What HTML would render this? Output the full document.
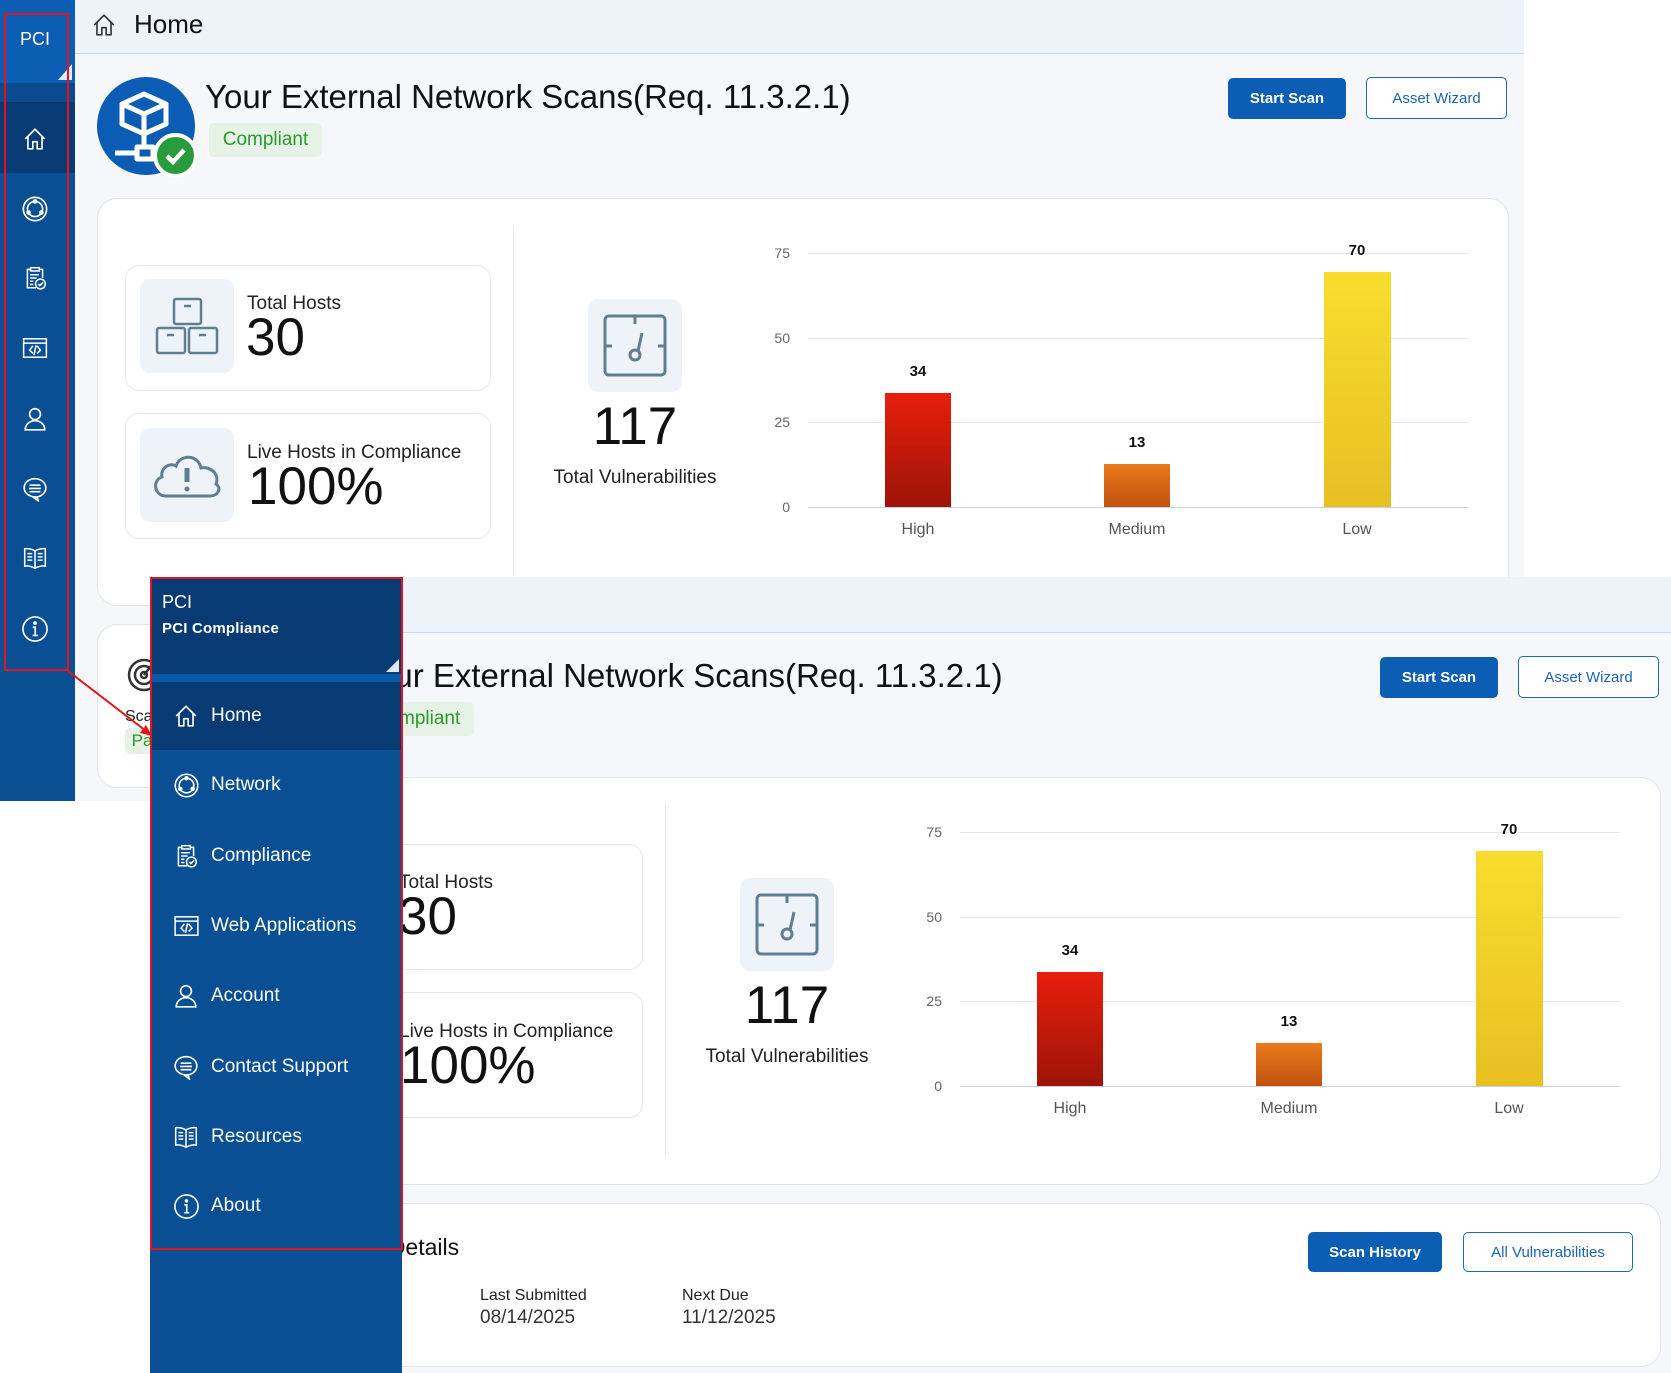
<!DOCTYPE html>
<html><head><meta charset="utf-8">
<style>
*{margin:0;padding:0;box-sizing:border-box}
body{width:1671px;height:1373px;position:relative;overflow:hidden;background:#fff;font-family:"Liberation Sans",sans-serif;color:#1a1a1a}
.abs{position:absolute}
.copy{position:absolute;overflow:hidden;background:#f5f7fa}
.hdr{position:absolute;left:75px;top:0;right:0;height:54px;background:#eef3fa;border-bottom:1px solid #c9d9ec}
.hdr span{position:absolute;top:9px;font-size:26px;color:#111;left:59px}
.title{position:absolute;left:205px;top:78px;font-size:33px;color:#111;white-space:nowrap}
.badge{position:absolute;background:#e6f2e6;color:#2a9a2a;border-radius:5px;font-size:19px;text-align:center}
.btn{position:absolute;border-radius:5px;font-size:15px;font-weight:bold;display:flex;align-items:center;justify-content:center}
.bp{background:#0b5eb3;color:#fff}
.bo{background:#fff;color:#1d63b5;border:1.5px solid #2265b5;font-weight:normal}
.card{position:absolute;background:#fff;border:1px solid #e1e4e8;border-radius:20px}
.ic{position:absolute;border:1px solid #e5e8eb;border-radius:14px;background:#fff}
.ibox{position:absolute;background:#eef3fa;border-radius:10px}
.lbl{position:absolute;font-size:19px;color:#222;white-space:nowrap}
.big{position:absolute;font-size:53px;color:#111;white-space:nowrap}
.sm{position:absolute;font-size:16px;color:#222;white-space:nowrap}
.val{position:absolute;font-size:19px;color:#333;white-space:nowrap}
.mi{position:absolute;left:0;width:252px;height:68px;color:#fff;font-size:19px}
.mi svg{position:absolute;left:23px;top:21px}
.mi span{position:absolute;left:61px;top:23px}
</style></head><body>
<svg width="0" height="0" style="position:absolute">
<defs>
<symbol id="home" viewBox="0 0 24 24"><path d="M3 12 L12 3 L21 12 M5.5 9.5 V21 H10 V14.5 H14 V21 H18.5 V9.5" fill="none" stroke="currentColor" stroke-width="1.5" stroke-linejoin="round"/></symbol>
<symbol id="net" viewBox="0 0 24 24"><g fill="none" stroke="currentColor" stroke-width="1.4"><circle cx="12" cy="12" r="10"/><circle cx="12" cy="12" r="6.5"/><circle cx="12" cy="5.5" r="1.3" fill="currentColor"/><circle cx="6.5" cy="15" r="1.3" fill="currentColor"/><circle cx="17.5" cy="15" r="1.3" fill="currentColor"/></g></symbol>
<symbol id="comp" viewBox="0 0 24 24"><g fill="none" stroke="currentColor" stroke-width="1.4"><path d="M13 21H5V4h3M16 4h3v8"/><rect x="8" y="2.5" width="8" height="3"/><path d="M7.5 9h8M7.5 12h6M7.5 15h3M7.5 18h3"/><circle cx="17" cy="17.5" r="4.5"/><path d="M15 17.5l1.5 1.5 3-3"/></g></symbol>
<symbol id="web" viewBox="0 0 24 24"><g fill="none" stroke="currentColor" stroke-width="1.4"><rect x="1.5" y="3.5" width="21" height="17"/><path d="M1.5 7.5h21M10 10l-3 4 3 3M14 10l3 4-3 3M13 9.5l-2 9"/></g></symbol>
<symbol id="acct" viewBox="0 0 24 24"><g fill="none" stroke="currentColor" stroke-width="1.5"><circle cx="12" cy="7.5" r="5"/><path d="M3 22c0-5 4-8.5 9-8.5s9 3.5 9 8.5z"/></g></symbol>
<symbol id="chat" viewBox="0 0 24 24"><g fill="none" stroke="currentColor" stroke-width="1.5"><path d="M12 2.5c5.5 0 10 3.8 10 8.5s-4.5 8.5-10 8.5c-.7 0-1.4 0-2-.2L15 23l-1-3.5C7 19.5 2 16 2 11s4.5-8.5 10-8.5z"/><path d="M7 8.5h10M6.5 11.5h11M7 14.5h10"/></g></symbol>
<symbol id="book" viewBox="0 0 24 24"><g fill="none" stroke="currentColor" stroke-width="1.4"><path d="M12 5.5C9 3.5 5 3 2.5 3.5v16c2.5-.5 6.5 0 9.5 2 3-2 7-2.5 9.5-2v-16c-2.5-.5-6.5 0-9.5 2zM12 5.5v16"/><path d="M5 8h4.5M5 11h4.5M5 14h4.5M14.5 8H19M14.5 11H19M14.5 14H19"/></g></symbol>
<symbol id="info" viewBox="0 0 24 24"><g fill="none" stroke="currentColor" stroke-width="1.4"><circle cx="12" cy="12" r="10.3"/><path d="M10 10.5h2.2v7M10 17.5h4.5"/><circle cx="12" cy="7" r=".9" fill="currentColor"/></g></symbol>
<linearGradient id="gr" x1="0" y1="0" x2="0" y2="1"><stop offset="0" stop-color="#e81e0c"/><stop offset="1" stop-color="#9c1408"/></linearGradient>
<linearGradient id="go" x1="0" y1="0" x2="0" y2="1"><stop offset="0" stop-color="#ea7a1c"/><stop offset="1" stop-color="#c2520f"/></linearGradient>
<linearGradient id="gy" x1="0" y1="0" x2="0" y2="1"><stop offset="0" stop-color="#f9dd2d"/><stop offset="1" stop-color="#e7bf22"/></linearGradient>
</defs></svg>

<!-- ============ COPY 1 ============ -->
<div class="copy" style="left:0;top:0;width:1524px;height:801px">
  <div class="hdr"><svg class="abs" style="left:16px;top:12px;color:#333" width="26" height="26"><use href="#home"/></svg><span>Home</span></div>
  <div class="abs" style="left:97px;top:77px;width:98px;height:98px;border-radius:50%;background:#0b5cb5"></div>
  <svg class="abs" style="left:97px;top:77px" width="98" height="98" viewBox="0 0 98 98"><g fill="none" stroke="#fff" stroke-width="5" stroke-linejoin="round"><path d="M25 27 L47 17 L69 27 L69 47 L47 57 L25 47Z M25 27 L47 37 L69 27 M47 37 V57 M47 57 V70 M18 76 H40 M40 70 H56 V82 H40Z"/></g></svg>
  <div class="abs" style="left:153px;top:133px;width:45px;height:45px;border-radius:50%;background:#2a9b3c;border:4px solid #fff"></div>
  <svg class="abs" style="left:153px;top:133px" width="45" height="45"><path d="M14 23 l6 6 11-12" fill="none" stroke="#fff" stroke-width="4.5"/></svg>
  <div class="title">Your External Network Scans(Req. 11.3.2.1)</div>
  <div class="badge" style="left:209px;top:123px;width:113px;height:34px;line-height:34px">Compliant</div>
  <div class="btn bp" style="left:1228px;top:78px;width:118px;height:41px">Start Scan</div>
  <div class="btn bo" style="left:1366px;top:77px;width:141px;height:42px">Asset Wizard</div>
  <div class="card" style="left:97px;top:198px;width:1412px;height:408px"></div>
  <div class="ic" style="left:125px;top:265px;width:366px;height:126px"></div>
  <div class="ibox" style="left:140px;top:279px;width:94px;height:94px"></div>
  <svg class="abs" style="left:140px;top:279px" width="94" height="94"><g fill="none" stroke="#5f7f90" stroke-width="2.5"><rect x="34" y="20" width="27" height="25" rx="2"/><rect x="17" y="49" width="28" height="25" rx="2"/><rect x="49" y="49" width="28" height="25" rx="2"/><path d="M44 27h7M27 56h7M59 56h7"/></g></svg>
  <div class="lbl" style="left:247px;top:293px">Total Hosts</div>
  <div class="big" style="left:246px;top:307px">30</div>
  <div class="ic" style="left:125px;top:413px;width:366px;height:126px"></div>
  <div class="ibox" style="left:140px;top:428px;width:94px;height:94px"></div>
  <svg class="abs" style="left:140px;top:428px" width="94" height="94"><g fill="none" stroke="#5f7f90" stroke-width="3"><path d="M26 68 C14 68 12 52 22 49 C20 40 30 34 36 38 C40 26 58 26 61 40 C70 38 80 46 76 56 C82 60 78 68 70 68Z"/><path d="M47 40v14" stroke-width="5"/><circle cx="47" cy="61" r="2.5" fill="#5f7f90" stroke="none"/></g></svg>
  <div class="lbl" style="left:247px;top:442px">Live Hosts in Compliance</div>
  <div class="big" style="left:248px;top:456px">100%</div>
  <div class="abs" style="left:513px;top:226px;width:1px;height:350px;background:#e6e8eb"></div>
  <div class="ibox" style="left:588px;top:299px;width:94px;height:93px"></div>
  <svg class="abs" style="left:588px;top:299px" width="94" height="93"><g fill="none" stroke="#5f7f90" stroke-width="3"><rect x="17" y="17" width="60" height="59" rx="4"/><path d="M47 17v8M17 47h7M70 47h7M54 34l-4 18"/><circle cx="47" cy="56" r="5"/></g></svg>
  <div class="big" style="left:535px;top:396px;width:200px;text-align:center">117</div>
  <div class="lbl" style="left:535px;top:467px;width:200px;text-align:center">Total Vulnerabilities</div>
  <svg class="abs" style="left:0;top:0" width="1524" height="801">
    <g font-family="Liberation Sans" font-size="14" fill="#666" text-anchor="end"><text x="790" y="258">75</text><text x="790" y="343">50</text><text x="790" y="427">25</text><text x="790" y="512">0</text></g>
    <g stroke="#e6e6e6"><path d="M808 253.5H1468M808 338.5H1468M808 422.5H1468"/></g>
    <path d="M808 507.5H1468" stroke="#c9d2e3"/>
    <rect x="885" y="393" width="66" height="114" fill="url(#gr)"/>
    <rect x="1104" y="464" width="66" height="43" fill="url(#go)"/>
    <rect x="1324" y="272" width="67" height="235" fill="url(#gy)"/>
    <g font-family="Liberation Sans" font-size="15" font-weight="bold" fill="#111" text-anchor="middle"><text x="918" y="376">34</text><text x="1137" y="447">13</text><text x="1357" y="255">70</text></g>
    <g font-family="Liberation Sans" font-size="16" fill="#555" text-anchor="middle"><text x="918" y="534">High</text><text x="1137" y="534">Medium</text><text x="1357" y="534">Low</text></g>
  </svg>
  <div class="card" style="left:97px;top:624px;width:1412px;height:164px"></div>
  <svg class="abs" style="left:126px;top:657px" width="36" height="36"><g fill="none" stroke="#333" stroke-width="2.5"><circle cx="18" cy="18" r="15"/><circle cx="18" cy="18" r="9"/><circle cx="18" cy="18" r="3"/><path d="M18 18 L28 5"/></g></svg>
  <div class="abs" style="left:178px;top:655px;font-size:23px;color:#111">Scan Details</div>
  <div class="sm" style="left:125px;top:708px">Scan Status</div>
  <div class="badge" style="left:125px;top:728px;width:70px;height:26px;line-height:26px;font-size:17px">Passed</div>
  <div class="sm" style="left:328px;top:708px">Last Submitted</div>
  <div class="val" style="left:328px;top:728px">08/14/2025</div>
  <div class="sm" style="left:530px;top:708px">Next Due</div>
  <div class="val" style="left:530px;top:728px">11/12/2025</div>
  <div class="btn bp" style="left:1156px;top:653px;width:134px;height:40px">Scan History</div>
  <div class="btn bo" style="left:1311px;top:653px;width:170px;height:40px">All Vulnerabilities</div>
  <!-- collapsed sidebar -->
  <div class="abs" style="left:0;top:0;width:75px;height:801px;background:#0a4f94"></div>
  <div class="abs" style="left:0;top:0;width:75px;height:83px;background:#0c5db4"></div>
  <div class="abs" style="left:0;top:83px;width:75px;height:19px;background:#0a4a8d"></div>
  <div class="abs" style="left:0;top:102px;width:75px;height:71px;background:#083b74"></div>
  <div class="abs" style="left:0;top:29px;width:70px;text-align:center;color:#fff;font-size:18px">PCI</div>
  <svg class="abs" style="left:58px;top:64px" width="14" height="16"><path d="M14 0V16H0Z" fill="#dfe8f3"/></svg>
  <svg class="abs" style="left:22px;top:126px;color:#fff" width="26" height="26"><use href="#home"/></svg>
  <svg class="abs" style="left:21px;top:195px;color:#fff" width="28" height="28"><use href="#net"/></svg>
  <svg class="abs" style="left:22px;top:265px;color:#fff" width="26" height="26"><use href="#comp"/></svg>
  <svg class="abs" style="left:21px;top:335px;color:#fff" width="28" height="26"><use href="#web"/></svg>
  <svg class="abs" style="left:22px;top:406px;color:#fff" width="26" height="26"><use href="#acct"/></svg>
  <svg class="abs" style="left:22px;top:476px;color:#fff" width="26" height="26"><use href="#chat"/></svg>
  <svg class="abs" style="left:22px;top:545px;color:#fff" width="26" height="26"><use href="#book"/></svg>
  <svg class="abs" style="left:21px;top:615px;color:#fff" width="28" height="28"><use href="#info"/></svg>
</div>

<!-- ============ COPY 2 ============ -->
<div class="copy" style="left:152px;top:577px;width:1519px;height:796px;background:#eef3fa">
 <div class="abs" style="left:0;top:2px;width:1524px;height:801px;background:#f5f7fa">
  <div class="hdr"><span>Home</span></div>
  <div class="title">Your External Network Scans(Req. 11.3.2.1)</div>
  <div class="badge" style="left:209px;top:123px;width:113px;height:34px;line-height:34px">Compliant</div>
  <div class="btn bp" style="left:1228px;top:78px;width:118px;height:41px">Start Scan</div>
  <div class="btn bo" style="left:1366px;top:77px;width:141px;height:42px">Asset Wizard</div>
  <div class="card" style="left:97px;top:198px;width:1412px;height:408px"></div>
  <div class="ic" style="left:125px;top:265px;width:366px;height:126px"></div>
  <div class="lbl" style="left:247px;top:293px">Total Hosts</div>
  <div class="big" style="left:246px;top:307px">30</div>
  <div class="ic" style="left:125px;top:413px;width:366px;height:126px"></div>
  <div class="lbl" style="left:247px;top:442px">Live Hosts in Compliance</div>
  <div class="big" style="left:248px;top:456px">100%</div>
  <div class="abs" style="left:513px;top:226px;width:1px;height:350px;background:#e6e8eb"></div>
  <div class="ibox" style="left:588px;top:299px;width:94px;height:93px"></div>
  <svg class="abs" style="left:588px;top:299px" width="94" height="93"><g fill="none" stroke="#5f7f90" stroke-width="3"><rect x="17" y="17" width="60" height="59" rx="4"/><path d="M47 17v8M17 47h7M70 47h7M54 34l-4 18"/><circle cx="47" cy="56" r="5"/></g></svg>
  <div class="big" style="left:535px;top:396px;width:200px;text-align:center">117</div>
  <div class="lbl" style="left:535px;top:467px;width:200px;text-align:center">Total Vulnerabilities</div>
  <svg class="abs" style="left:0;top:0" width="1524" height="801">
    <g font-family="Liberation Sans" font-size="14" fill="#666" text-anchor="end"><text x="790" y="258">75</text><text x="790" y="343">50</text><text x="790" y="427">25</text><text x="790" y="512">0</text></g>
    <g stroke="#e6e6e6"><path d="M808 253.5H1468M808 338.5H1468M808 422.5H1468"/></g>
    <path d="M808 507.5H1468" stroke="#c9d2e3"/>
    <rect x="885" y="393" width="66" height="114" fill="url(#gr)"/>
    <rect x="1104" y="464" width="66" height="43" fill="url(#go)"/>
    <rect x="1324" y="272" width="67" height="235" fill="url(#gy)"/>
    <g font-family="Liberation Sans" font-size="15" font-weight="bold" fill="#111" text-anchor="middle"><text x="918" y="376">34</text><text x="1137" y="447">13</text><text x="1357" y="255">70</text></g>
    <g font-family="Liberation Sans" font-size="16" fill="#555" text-anchor="middle"><text x="918" y="534">High</text><text x="1137" y="534">Medium</text><text x="1357" y="534">Low</text></g>
  </svg>
  <div class="card" style="left:97px;top:624px;width:1412px;height:164px"></div>
  <div class="abs" style="left:178px;top:655px;font-size:23px;color:#111">Scan Details</div>
  <div class="sm" style="left:328px;top:708px">Last Submitted</div>
  <div class="val" style="left:328px;top:728px">08/14/2025</div>
  <div class="sm" style="left:530px;top:708px">Next Due</div>
  <div class="val" style="left:530px;top:728px">11/12/2025</div>
  <div class="btn bp" style="left:1156px;top:653px;width:134px;height:40px">Scan History</div>
  <div class="btn bo" style="left:1311px;top:653px;width:170px;height:40px">All Vulnerabilities</div>
 </div>
</div>

<!-- expanded menu -->
<div class="abs" style="left:150px;top:577px;width:252px;height:796px;background:#0a4f94;color:#fff">
  <div class="abs" style="left:0;top:0;width:252px;height:97px;background:#083b74"></div>
  <div class="abs" style="left:0;top:97px;width:252px;height:8px;background:#0a58a8"></div>
  <div class="abs" style="left:0;top:105px;width:252px;height:68px;background:#083b74"></div>
  <div class="abs" style="left:12px;top:15px;font-size:18px">PCI</div>
  <div class="abs" style="left:12px;top:43px;font-size:15px;font-weight:bold;letter-spacing:.2px">PCI Compliance</div>
  <svg class="abs" style="left:236px;top:82px" width="13" height="13"><path d="M13 0V13H0Z" fill="#dfe8f3"/></svg>
  <div class="mi" style="top:105px"><svg width="26" height="26"><use href="#home"/></svg><span>Home</span></div>
  <div class="mi" style="top:174px"><svg width="27" height="27"><use href="#net"/></svg><span>Network</span></div>
  <div class="mi" style="top:245px"><svg width="26" height="26"><use href="#comp"/></svg><span>Compliance</span></div>
  <div class="mi" style="top:315px"><svg width="27" height="26"><use href="#web"/></svg><span>Web Applications</span></div>
  <div class="mi" style="top:385px"><svg width="26" height="26"><use href="#acct"/></svg><span>Account</span></div>
  <div class="mi" style="top:456px"><svg width="26" height="26"><use href="#chat"/></svg><span>Contact Support</span></div>
  <div class="mi" style="top:526px"><svg width="26" height="26"><use href="#book"/></svg><span>Resources</span></div>
  <div class="mi" style="top:595px"><svg width="27" height="27"><use href="#info"/></svg><span>About</span></div>
</div>

<!-- red annotations -->
<div class="abs" style="left:4px;top:13px;width:65px;height:658px;border:2px solid #e3141b"></div>
<div class="abs" style="left:150px;top:577px;width:253px;height:673px;border:2px solid #e3141b"></div>
<svg class="abs" style="left:0;top:0" width="200" height="800"><path d="M68 671 L150 734" stroke="#e3141b" stroke-width="2"/><path d="M152 736 L140 733 L146 725Z" fill="#e3141b"/></svg>
</body></html>
